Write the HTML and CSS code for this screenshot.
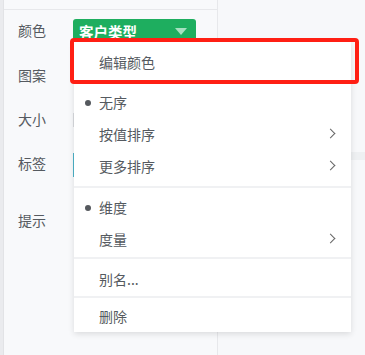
FILE: index.html
```html
<!DOCTYPE html>
<html lang="zh-CN">
<head>
    <meta charset="UTF-8">
    <title>字段设置</title>
    <link rel="stylesheet" href="styles.css">
</head>
<body>
    <div class="layout">
        <div class="rail"></div>

        <div class="panel">
            <div class="panel-top"></div>

            <div class="row row-color">
                <span class="label">颜色</span>
                <div class="field-pill">
                    <span>客户类型</span>
                    <span class="caret"></span>
                </div>
            </div>
            <div class="row row-shape">
                <span class="label">图案</span>
            </div>
            <div class="row row-size">
                <span class="label">大小</span>
                <div class="size-box"></div>
            </div>
            <div class="row row-tag">
                <span class="label">标签</span>
                <div class="tag-box"></div>
            </div>
            <div class="row row-tip">
                <span class="label">提示</span>
            </div>
        </div>

        <div class="canvas">
            <div class="canvas-band"></div>
        </div>
    </div>

    <!-- 右键菜单 -->
    <div class="menu">
        <div class="menu-group first">
            <div class="menu-item">编辑颜色</div>
        </div>
        <div class="menu-group sort">
            <div class="menu-item checked">无序</div>
            <div class="menu-item has-sub">按值排序</div>
            <div class="menu-item has-sub">更多排序</div>
        </div>
        <div class="menu-group kind">
            <div class="menu-item checked">维度</div>
            <div class="menu-item has-sub">度量</div>
        </div>
        <div class="menu-group alias">
            <div class="menu-item">别名...</div>
        </div>
        <div class="menu-group last">
            <div class="menu-item">删除</div>
        </div>
    </div>

    <div class="highlight"></div>
</body>
</html>
```

FILE: styles.css
```css
:root {
    --bg: #f7f8fa;
    --line: #e7e8eb;
    --text: #555a60;
    --green: #1eae5f;
    --red: #ff1f14;
}

* {
    margin: 0;
    padding: 0;
    box-sizing: border-box;
}

body {
    width: 365px;
    height: 355px;
    overflow: hidden;
    background-color: var(--bg);
    color: var(--text);
    font-family: "Noto Sans CJK SC", "Noto Sans", sans-serif;
    font-size: 14px;
    position: relative;
}

.layout {
    display: flex;
    height: 355px;
}

.rail {
    width: 4px;
    background-color: #eaebee;
    border-right: 1px solid #e2e3e6;
}

.panel {
    width: 214px;
    border-right: 1px solid var(--line);
    background-color: #f8f9fb;
}

.panel-top {
    height: 11px;
    border-bottom: 1px solid var(--line);
    margin-top: -1px;
}

.row {
    display: flex;
    align-items: center;
    padding-left: 14px;
}

.row-color { height: 44px; }
.row-shape { height: 45px; }
.row-size  { height: 43px; }
.row-tag   { height: 45px; }
.row-tip   { height: 70px; }

.label {
    width: 55px;
    flex-shrink: 0;
    line-height: 1;
    padding-bottom: 4px;
}

.field-pill {
    width: 123px;
    height: 24px;
    margin-top: -2px;
    background-color: var(--green);
    border-radius: 3px;
    color: #fff;
    font-size: 14.5px;
    font-weight: 600;
    display: flex;
    align-items: center;
    justify-content: space-between;
    padding: 0 9px 0 6px;
}

.caret {
    width: 0;
    height: 0;
    border-left: 6px solid transparent;
    border-right: 6px solid transparent;
    border-top: 7px solid #a6e0c0;
}

.size-box {
    width: 40px;
    height: 14px;
    background-color: #d9dbdf;
    margin-top: -2px;
}

.tag-box {
    width: 40px;
    height: 24px;
    border-left: 2px solid #4cb3c9;
}

.canvas {
    flex: 1;
    padding-top: 152px;
}

.canvas-band {
    height: 8px;
    background-color: #eef0f2;
}

/* 菜单 */
.menu {
    position: absolute;
    left: 74px;
    top: 42px;
    width: 277px;
    background-color: #fff;
    box-shadow: 0 2px 6px rgba(0, 0, 0, 0.12);
}

.menu-group {
    border-top: 2px solid #f0f1f3;
}

.menu-group.first {
    border-top: none;
    padding: 4px 0 2px;
}

.menu-group.sort {
    padding: 4px 0;
}

.menu-group.kind {
    padding: 3px 0 2px;
}

.menu-group.alias {
    padding: 4px 0 1px;
}

.menu-group.last {
    padding: 2px 0 0;
}

.menu-item {
    height: 32px;
    line-height: 32px;
    padding-left: 25px;
    position: relative;
    color: #555a60;
}

.menu-item.checked::before {
    content: '';
    position: absolute;
    left: 11px;
    top: 14px;
    width: 6px;
    height: 6px;
    border-radius: 50%;
    background-color: #55595e;
}

.menu-item.has-sub::after {
    content: '';
    position: absolute;
    right: 17px;
    top: 12px;
    width: 6px;
    height: 6px;
    border-top: 1.5px solid #666;
    border-right: 1.5px solid #666;
    transform: rotate(45deg);
}

/* 标注框 */
.highlight {
    position: absolute;
    left: 70px;
    top: 38px;
    width: 289px;
    height: 46px;
    border: 4px solid var(--red);
    border-radius: 4px;
}
```
